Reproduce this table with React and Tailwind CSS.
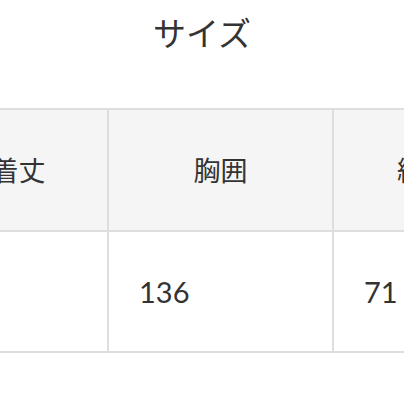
import React from "react";

const COLUMNS = [
  { label: "着丈", value: "", width: "w-[179px]" },
  { label: "胸囲", value: "136", width: "w-[225px]" },
  { label: "総丈", value: "71", width: "w-[182px]" },
];

const FONT = { fontFamily: 'Lato, "Noto Sans CJK JP", sans-serif' };

export default function App() {
  return (
    <div className="h-[404px] w-[404px] overflow-hidden bg-white text-[#333]" style={FONT}>
      <h2 className="flex h-[66px] items-center justify-center text-[33px] font-normal leading-none">
        サイズ
      </h2>

      <div className="mt-[42px] -ml-[70px] flex flex-col">
        <div className="flex border-y-2 border-[#dedede] bg-[#f5f5f5]">
          {COLUMNS.map((col) => (
            <div
              key={col.label}
              className={`${col.width} flex h-[120px] shrink-0 items-center justify-center border-r-2 border-[#dedede] text-[27px] leading-none`}
            >
              {col.label}
            </div>
          ))}
        </div>
        <div className="flex border-b-2 border-[#dedede] bg-white">
          {COLUMNS.map((col) => (
            <div
              key={col.label}
              className={`${col.width} flex h-[119px] shrink-0 items-center border-r-2 border-[#dedede] pl-[30px] text-[29px] leading-none`}
            >
              {col.value}
            </div>
          ))}
        </div>
      </div>
    </div>
  );
}
